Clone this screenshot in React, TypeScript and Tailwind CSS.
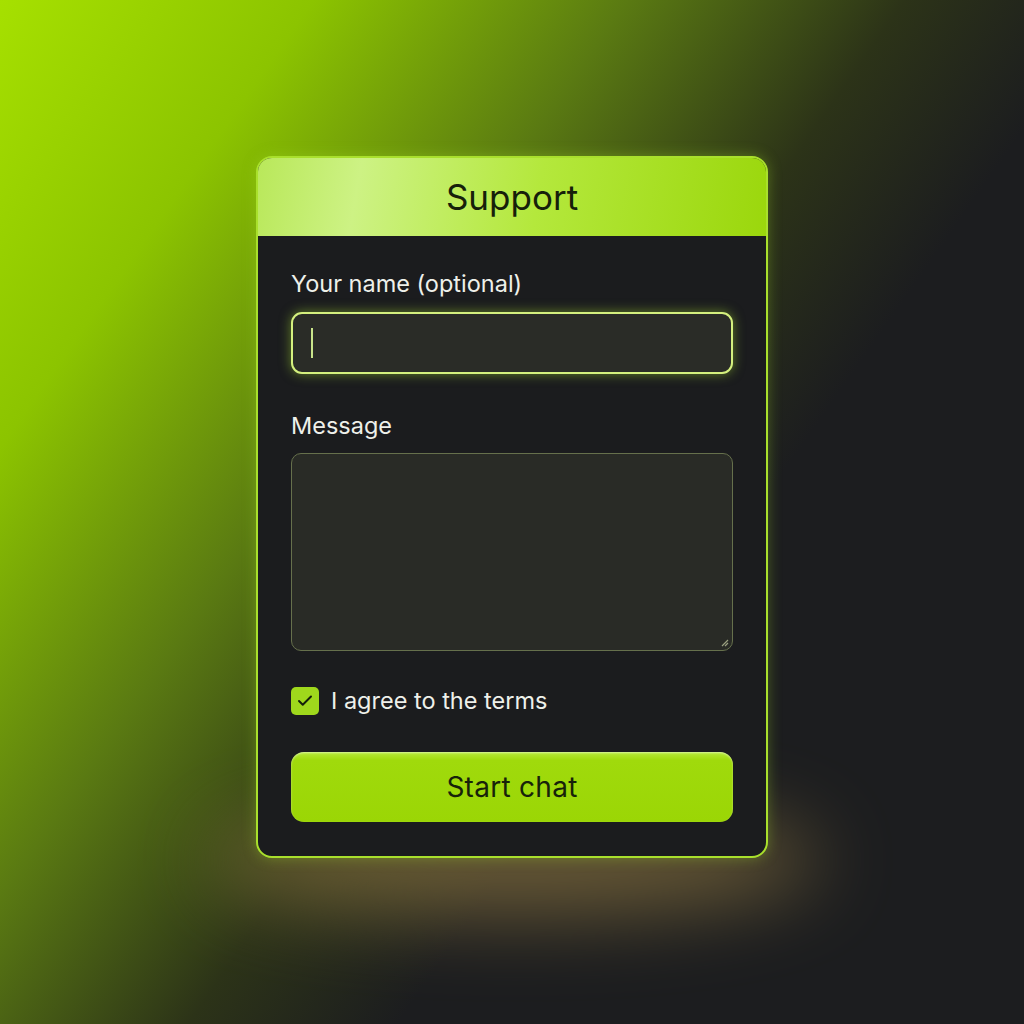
import { Check } from "lucide-react";

export default function App() {
    return (
        <div
            className="relative w-full h-[1024px] overflow-hidden bg-[#1c1d1f] flex justify-center pt-[156px]"
            style={{ fontFamily: "Inter, 'Noto Sans', sans-serif" }}
        >
            {/* fundo: luz verde vindo do canto superior esquerdo */}
            <div className="absolute inset-0 bg-[linear-gradient(125deg,#a6e000_0%,#8cc400_18%,#5a7a12_36%,#2c3318_52%,#1c1d1f_64%)]" />
            {/* brilho quente abaixo do card */}
            <div className="absolute left-[210px] top-[805px] w-[610px] h-[110px] rounded-[50%] bg-[#8a7440] opacity-70 blur-[40px]" />

            <div className="relative w-[512px] h-[702px] rounded-[16px] border-2 border-[#a9e02c] bg-[#1b1c1e] overflow-hidden shadow-[0_0_14px_rgba(160,220,40,0.35)] flex flex-col">
                <div className="h-[78px] shrink-0 bg-[linear-gradient(100deg,#b9e85a_0%,#cdf284_20%,#b4e83c_55%,#9bd70c_100%)] flex items-center justify-center">
                    <h1 className="text-[35px] text-[#16200a]">Support</h1>
                </div>

                <div className="flex flex-col px-[33px] pt-[33px]">
                    <label className="text-[23.5px] leading-[30px] text-[#eef0ea]">Your name (optional)</label>
                    <div className="mt-[13px] h-[62px] rounded-[11px] border-2 border-[#d4f07e] bg-[#2a2c27] shadow-[0_0_12px_rgba(170,225,50,0.5)] flex items-center pl-[18px]">
                        <div className="w-[2px] h-[30px] bg-[#c8e48a]" />
                    </div>

                    <label className="mt-[37px] text-[23.5px] leading-[30px] text-[#eef0ea]">Message</label>
                    <div className="relative mt-[12px] h-[198px] rounded-[10px] border border-[#66704c] bg-[#292b26]">
                        <svg className="absolute right-[3px] bottom-[3px]" width="8" height="8" viewBox="0 0 8 8">
                            <path d="M7 1 L1 7 M7 4 L4 7" stroke="#9aa080" strokeWidth="1.2" />
                        </svg>
                    </div>

                    <div className="mt-[36px] flex items-center gap-[12px]">
                        <div className="w-[28px] h-[28px] rounded-[5px] bg-[#9fd81c] flex items-center justify-center">
                            <Check size={18} strokeWidth={2.6} className="text-[#14200a]" />
                        </div>
                        <span className="text-[23.5px] leading-[28px] text-[#eef0ea]">I agree to the terms</span>
                    </div>

                    <button className="mt-[37px] h-[70px] rounded-[13px] bg-[linear-gradient(180deg,#b6ea3a_0%,#a0da0c_12%,#9bd605_100%)] shadow-[inset_0_1px_2px_rgba(255,255,255,0.5)] text-[28px] tracking-[0.01em] text-[#17220a]">
                        Start chat
                    </button>
                </div>
            </div>
        </div>
    );
}
